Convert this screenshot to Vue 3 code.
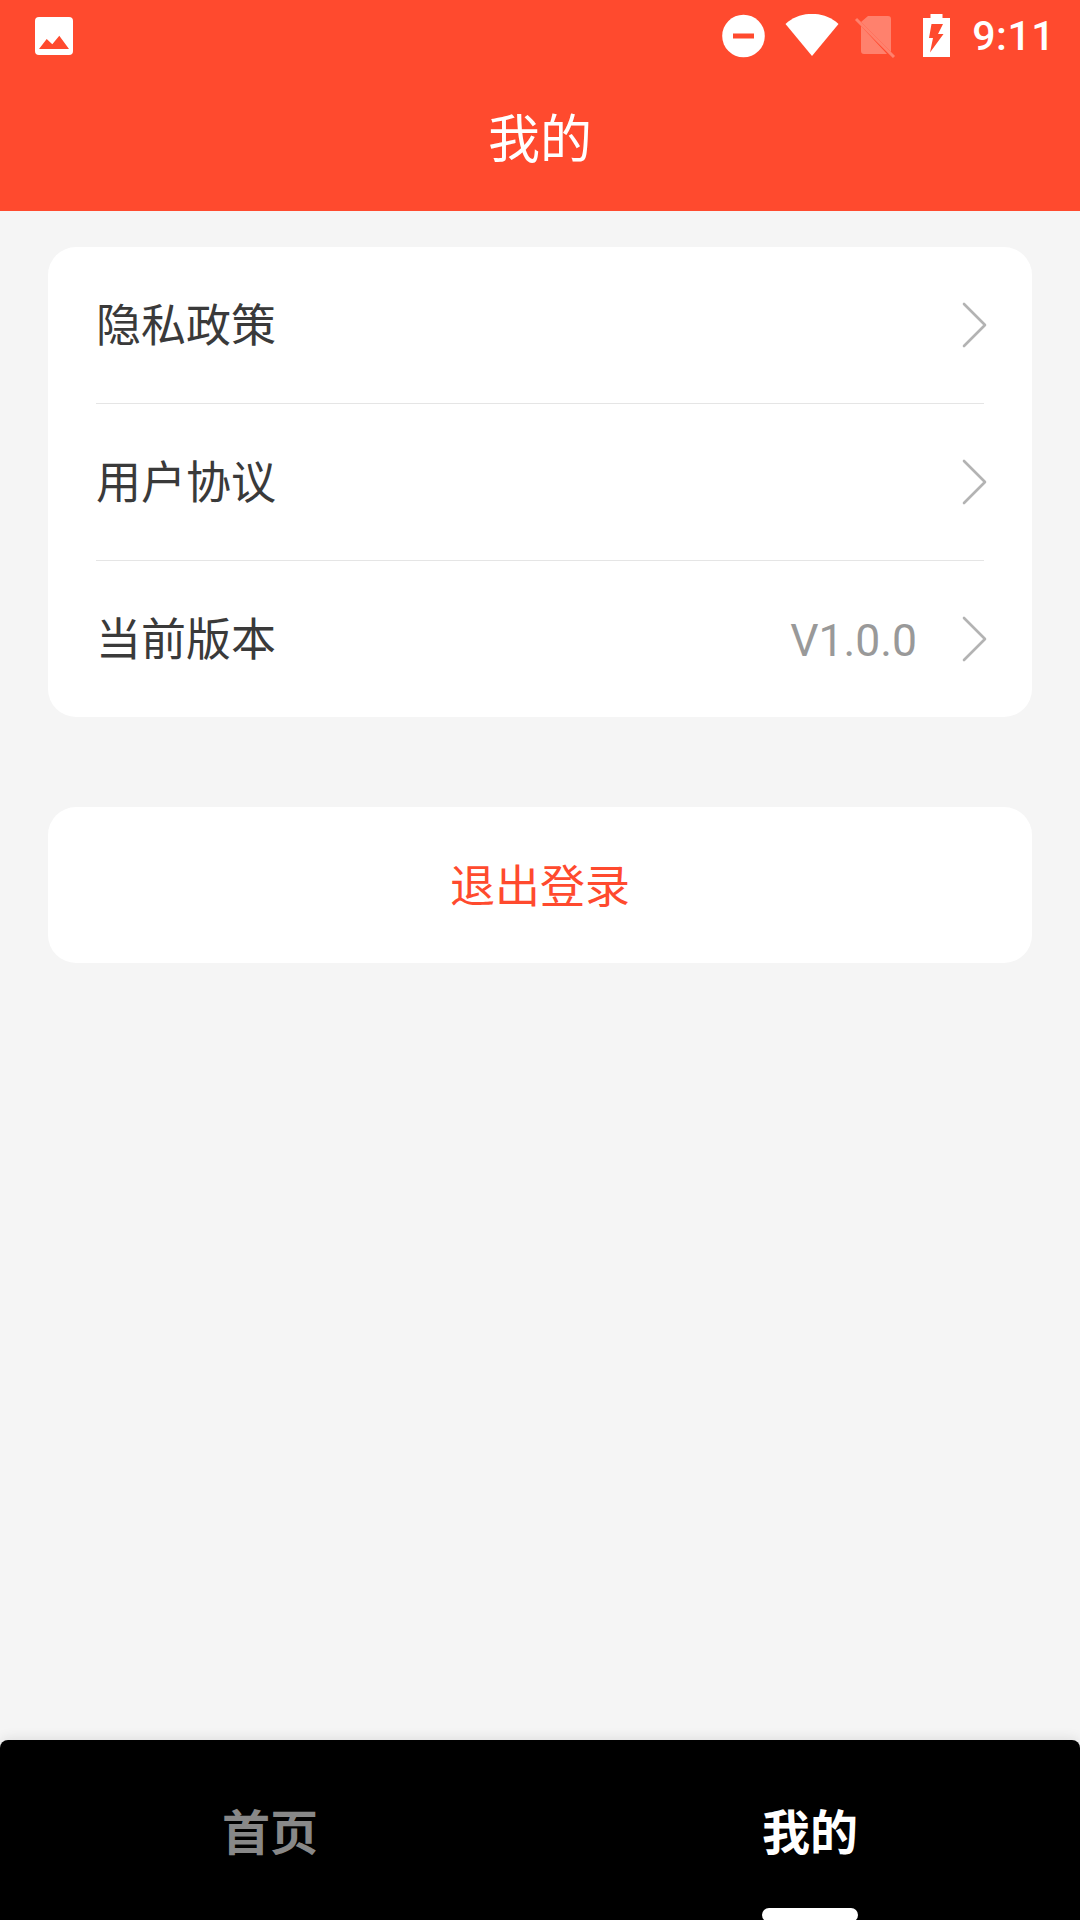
<template>
  <div class="page">
    <header class="header">
      <div class="status-bar">
        <svg class="ic-image" width="38" height="38" viewBox="0 0 38 38">
          <rect width="38" height="38" rx="4" fill="#fff" />
          <path d="M4 32 L11.7 22 L17.3 27.3 L24.3 18.7 L34 32 Z" fill="#ff4a2e" />
        </svg>
        <div class="status-right">
          <svg class="ic-dnd" width="44" height="44" viewBox="0 0 44 44">
            <circle cx="21.5" cy="22" r="21.3" fill="#fff" />
            <rect x="11" y="19.5" width="21" height="5" fill="#ff4a2e" />
          </svg>
          <svg class="ic-wifi" width="54" height="44" viewBox="0 0 54 44">
            <path d="M0.5 10 C15 -3.5 39 -3.5 53.5 10 L27 42 Z" fill="#fff" />
          </svg>
          <svg class="ic-sim" width="42" height="44" viewBox="0 0 42 44">
            <g opacity="0.3">
              <path d="M14 2 H34 Q37 2 37 5 V38 L7 8 Z M7 12 L33 40 H10 Q7 40 7 37 Z" fill="#fff" />
              <path d="M2 5 L40 43" stroke="#fff" stroke-width="3" />
            </g>
          </svg>
          <svg class="ic-battery" width="27" height="44" viewBox="0 0 27 44">
            <path d="M7.5 0 H19.5 V4 H27 V43 H0 V4 H7.5 Z" fill="#fff" />
            <path d="M8.5 10 H20 L15 20 H20.5 L7 38.5 L10 24 H6 Z" fill="#ff4a2e" />
          </svg>
          <span class="time">9:11</span>
        </div>
      </div>
      <h1 class="title">我的</h1>
    </header>

    <main class="content">
      <section class="card">
        <div v-for="item in items" :key="item.label" class="row">
          <span class="label">{{ item.label }}</span>
          <span v-if="item.value" class="value">{{ item.value }}</span>
          <svg class="chevron" width="26" height="46" viewBox="0 0 26 46">
            <path d="M2 2 L23 23 L2 44" fill="none" stroke="#b3b3b3" stroke-width="2.6" stroke-linecap="round" stroke-linejoin="round" />
          </svg>
        </div>
      </section>
      <button class="logout">退出登录</button>
    </main>

    <nav class="tabbar">
      <div v-for="tab in tabs" :key="tab.label" class="tab" :class="{ active: tab.active }">
        {{ tab.label }}
        <i v-if="tab.active" class="indicator"></i>
      </div>
    </nav>
  </div>
</template>

<script setup>
const items = [
  { label: "隐私政策" },
  { label: "用户协议" },
  { label: "当前版本", value: "V1.0.0" },
];

const tabs = [
  { label: "首页", active: false },
  { label: "我的", active: true },
];
</script>

<style scoped>
* {
  box-sizing: border-box;
}

.page {
  display: flex;
  flex-direction: column;
  height: 1920px;
  overflow: hidden;
  background: #f5f5f5;
  font-family: Roboto, "Noto Sans CJK SC", sans-serif;
}

.header {
  height: 211px;
  background: #ff4a2e;
  color: #fff;
}

.status-bar {
  display: flex;
  justify-content: space-between;
  align-items: center;
  height: 72px;
  padding: 0 25px 0 35px;
}

.status-right {
  display: flex;
  align-items: center;
}

.ic-wifi {
  margin-left: 19px;
}

.ic-sim {
  margin-left: 15px;
}

.ic-battery {
  margin-left: 27px;
}

.time {
  margin-left: 22px;
  font-size: 41px;
  font-weight: 500;
  letter-spacing: 0.5px;
}

.title {
  margin: 0;
  height: 139px;
  line-height: 138px;
  text-align: center;
  font-size: 52px;
  font-weight: 400;
}

.content {
  flex: 1;
  padding: 36px 48px 0;
}

.card {
  background: #fff;
  border-radius: 28px;
  padding: 0 48px;
}

.row {
  display: flex;
  align-items: center;
  height: 157px;
  border-bottom: 1px solid #e5e5e5;
}

.row:last-child {
  height: 156px;
  border-bottom: none;
}

.label {
  flex: 1;
  padding-bottom: 5px;
  font-size: 45px;
  color: #3a3a3a;
}

.value {
  margin-right: 45px;
  padding-top: 3px;
  font-size: 44.5px;
  color: #999;
}

.chevron {
  margin-right: -4px;
}

.logout {
  display: block;
  width: 100%;
  height: 156px;
  margin-top: 90px;
  padding: 0 0 4px;
  border: none;
  border-radius: 28px;
  background: #fff;
  color: #ff4a2e;
  font-family: inherit;
  font-size: 45px;
}

.tabbar {
  display: flex;
  height: 180px;
  background: #000;
  border-radius: 8px 8px 0 0;
  box-shadow: 0 0 14px rgba(0, 0, 0, 0.12);
}

.tab {
  position: relative;
  flex: 1;
  display: flex;
  justify-content: center;
  align-items: center;
  padding-bottom: 2px;
  font-size: 48px;
  font-weight: 700;
  color: #888;
}

.tab.active {
  color: #fff;
}

.indicator {
  position: absolute;
  left: 50%;
  bottom: -2px;
  width: 96px;
  height: 14px;
  margin-left: -48px;
  border-radius: 7px;
  background: #fff;
}
</style>
